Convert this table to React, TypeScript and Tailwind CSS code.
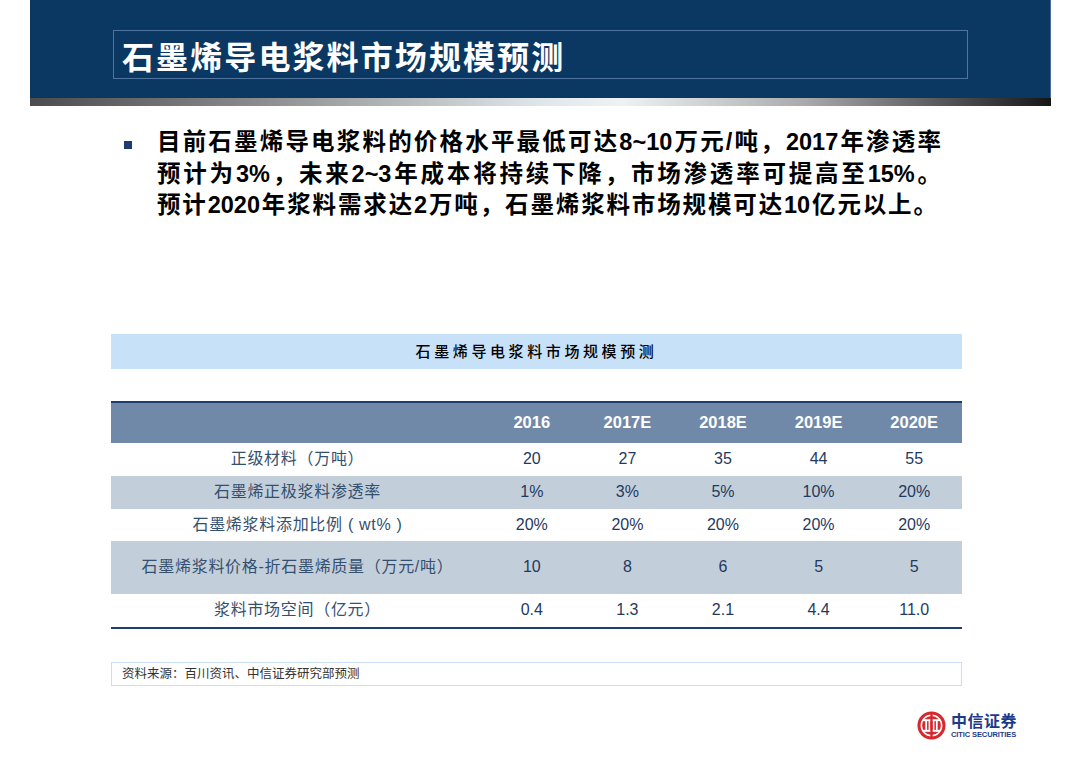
import React from "react";

const rows: { label: string; vals: string[]; tall?: boolean; gray?: boolean }[] = [
  { label: "正级材料（万吨）", vals: ["20", "27", "35", "44", "55"] },
  { label: "石墨烯正极浆料渗透率", vals: ["1%", "3%", "5%", "10%", "20%"], gray: true },
  { label: "石墨烯浆料添加比例 ( wt% )", vals: ["20%", "20%", "20%", "20%", "20%"] },
  { label: "石墨烯浆料价格-折石墨烯质量（万元/吨）", vals: ["10", "8", "6", "5", "5"], gray: true, tall: true },
  { label: "浆料市场空间（亿元）", vals: ["0.4", "1.3", "2.1", "4.4", "11.0"] },
];

const years = ["2016", "2017E", "2018E", "2019E", "2020E"];

function Logo() {
  return (
    <div className="flex items-center gap-[5px]">
      <svg width="29" height="29" viewBox="0 0 30 30">
        <circle cx="15" cy="15" r="14.5" fill="#d42a2f" />
        <circle cx="15" cy="15" r="10.5" fill="none" stroke="#fff" strokeWidth="1.6" />
        <rect x="6" y="8.5" width="18" height="2" fill="#fff" />
        <rect x="6" y="19.5" width="18" height="2" fill="#fff" />
        <rect x="8.6" y="9" width="1.8" height="12" fill="#fff" />
        <rect x="12" y="9" width="1.8" height="12" fill="#fff" />
        <rect x="16.2" y="9" width="1.8" height="12" fill="#fff" />
        <rect x="19.6" y="9" width="1.8" height="12" fill="#fff" />
        <rect x="13.8" y="3" width="2.4" height="24" fill="#d42a2f" />
      </svg>
      <div className="flex flex-col gap-[2px]">
        <div
          className="text-[16px] font-bold leading-[16px] h-[16px] text-[#1d3a8a] tracking-[0.5px]"
          style={{ fontFamily: '"Noto Sans CJK SC", sans-serif' }}
        >
          中信证券
        </div>
        <div
          className="text-[7.5px] font-bold leading-[9px] text-[#1d3a8a] tracking-[-0.1px]"
          style={{ fontFamily: '"Liberation Sans", sans-serif' }}
        >
          CITIC SECURITIES
        </div>
      </div>
    </div>
  );
}

export default function App() {
  const cjk = '"Noto Sans CJK SC", sans-serif';
  const mixed = '"Liberation Sans", "Noto Sans CJK SC", sans-serif';
  return (
    <div className="w-[1080px] h-[764px] bg-white relative overflow-hidden" style={{ fontFamily: mixed }}>
      {/* Header */}
      <div className="ml-[30px] w-[1021px]">
        <div className="h-[98px] bg-[#0a3862] pt-[30px] pl-[83px] border-r border-[#4a6d96]">
          <div className="w-[855px] h-[49px] border border-[#4f74a0] flex items-center pl-[8px]">
            <span
              className="text-white font-bold text-[32px] tracking-[2.1px] leading-none"
              style={{ fontFamily: cjk }}
            >
              石墨烯导电浆料市场规模预测
            </span>
          </div>
        </div>
        <div className="h-[8px] bg-[linear-gradient(90deg,#4b4b4b_0%,#8a8a8a_22%,#dfe6ea_50%,#eef2f4_58%,#a9a9a9_76%,#161616_100%)]" />
      </div>

      {/* Bullet paragraph */}
      <div className="mt-[21px] flex pl-[124px]">
        <div className="w-[8px] h-[8px] bg-[#1f3c6e] mt-[14px] shrink-0" />
        <div className="ml-[25px] w-[784px] text-[23.5px] font-bold leading-[31.5px] text-black">
          <div className="text-justify [text-align-last:justify]">目前石墨烯导电浆料的价格水平最低可达8~10万元/吨，2017年渗透率</div>
          <div className="text-justify [text-align-last:justify]">预计为3%，未来2~3年成本将持续下降，市场渗透率可提高至15%。</div>
          <div className="text-justify [text-align-last:justify] pr-[4px]">预计2020年浆料需求达2万吨，石墨烯浆料市场规模可达10亿元以上。</div>
        </div>
      </div>

      {/* Table caption */}
      <div className="mt-[112px] ml-[111px] w-[851px] h-[35px] bg-[#c6e1f8] flex items-center justify-center">
        <span className="text-[15px] font-medium tracking-[3.6px] text-black" style={{ fontFamily: cjk }}>
          石墨烯导电浆料市场规模预测
        </span>
      </div>

      {/* Table */}
      <div className="mt-[32px] ml-[111px] w-[851px] border-t-2 border-b-2 border-[#1f3c6e]">
        <div className="flex h-[40px] bg-[#7189a8] items-center">
          <div className="w-[373px]" />
          {years.map((y) => (
            <div key={y} className="w-[95.6px] text-center text-white font-bold text-[16.5px]" style={{ fontFamily: '"Liberation Sans", sans-serif' }}>
              {y}
            </div>
          ))}
        </div>
        {rows.map((r, i) => (
          <div
            key={i}
            className={`flex items-center ${r.gray ? "bg-[#c3cedb]" : "bg-white"} ${r.tall ? "h-[53px]" : i === 2 ? "h-[32px]" : "h-[33px]"}`}
          >
            <div className="w-[373px] text-center text-[16px] tracking-[0.7px] text-[#34506f]" style={{ fontFamily: mixed }}>
              {r.label}
            </div>
            {r.vals.map((v, j) => (
              <div key={j} className="w-[95.6px] text-center text-[16px] text-[#1f3a5e]" style={{ fontFamily: '"Liberation Sans", sans-serif' }}>
                {v}
              </div>
            ))}
          </div>
        ))}
      </div>

      {/* Source */}
      <div className="mt-[33px] ml-[111px] w-[851px] h-[24px] border border-[#c9def4] flex items-center pl-[10px]">
        <span className="text-[12.5px] text-[#333]" style={{ fontFamily: cjk }}>
          资料来源：百川资讯、中信证券研究部预测
        </span>
      </div>

      {/* Logo */}
      <div className="mt-[25px] ml-[917px]">
        <Logo />
      </div>
    </div>
  );
}
